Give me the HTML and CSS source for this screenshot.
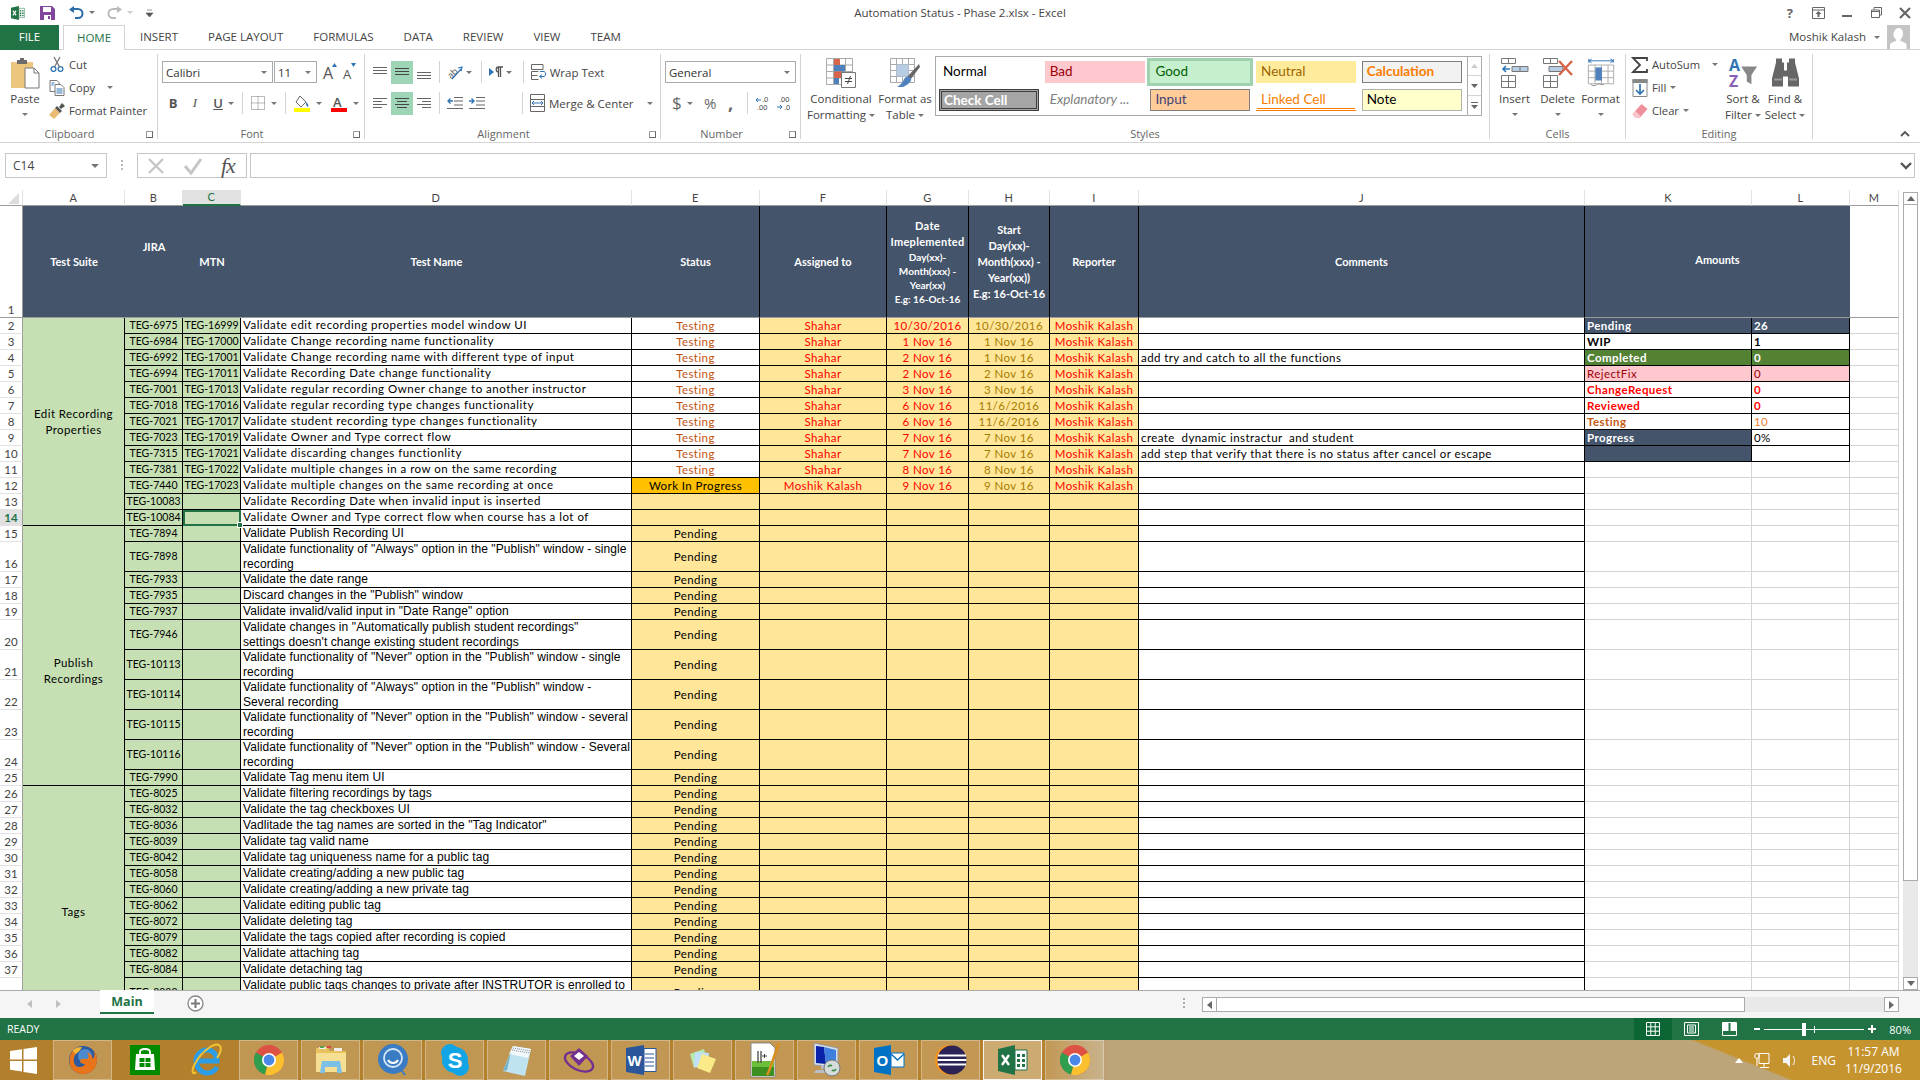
FILE: index.html
```html
<!DOCTYPE html>
<html lang="en">

<head>
    <meta charset="UTF-8">
    <meta name="viewport" content="width=device-width, initial-scale=1.0">
    <title>Automation Status - Phase 2.xlsx - Excel</title>
    <link rel="stylesheet" href="styles.css">
</head>

<body>
    <!-- shared logos -->
    <svg class="defs" width="0" height="0">
        <symbol id="logo-excel" viewBox="0 0 30 30">
            <path d="M0 4 17 0V30L0 26Z" fill="#217346"/>
            <path d="M4 10l7 10M11 10 4 20" stroke="#fff" stroke-width="2.4" fill="none"/>
            <path d="M17 5H29V25H17Z" fill="#fff" stroke="#217346"/>
            <path d="M19 9h3v3h-3zM24 9h3v3h-3zM19 14h3v3h-3zM24 14h3v3h-3zM19 19h3v3h-3zM24 19h3v3h-3z" fill="#217346"/>
        </symbol>
        <symbol id="logo-chrome" viewBox="0 0 30 30">
            <circle cx="15" cy="15" r="15" fill="#de5245"/>
            <path d="M15 15 2 7.5A15 15 0 0 0 11 29.5Z" fill="#2f9e4f"/>
            <path d="M15 15 28 7.5A15 15 0 0 1 11 29.5L15 15Z" fill="#fbc02d"/>
            <circle cx="15" cy="15" r="7" fill="#fff"/>
            <circle cx="15" cy="15" r="5.4" fill="#4a88e8"/>
        </symbol>
    </svg>

    <div class="app">
        <!-- Title bar -->
        <header class="titlebar">
            <div class="qat">
                <svg class="qat-logo" width="16" height="14"><use href="#logo-excel"/></svg>
                <svg width="15" height="14" viewBox="0 0 15 14"><path d="M0 0H12L15 3V14H0Z" fill="#80479c"/><path d="M3 1h8v5H3z" fill="#fff"/><path d="M4 9h7v5H4z" fill="#fff"/><path d="M8 10h2v3H8z" fill="#80479c"/></svg>
                <svg class="undo" width="15" height="14" viewBox="0 0 15 14"><path d="M4 3H9A4.5 4.5 0 0 1 9 12H6" fill="none" stroke="#2b6ca8" stroke-width="2"/><path d="M5 0V7L0 3.5Z" fill="#2b6ca8"/></svg>
                <span class="caret"></span>
                <svg class="redo" width="15" height="14" viewBox="0 0 15 14"><path d="M11 3H6A4.5 4.5 0 0 0 6 12H9" fill="none" stroke="#bbb" stroke-width="2"/><path d="M10 0V7L15 3.5Z" fill="#bbb"/></svg>
                <span class="caret pale"></span>
                <svg class="qat-more" width="7" height="8" viewBox="0 0 7 8"><path d="M1 1h5M0 4h7L3.5 8Z" fill="#555" stroke="#555" stroke-width=".6"/></svg>
            </div>
            <div class="doc-title">Automation Status - Phase 2.xlsx - Excel</div>
            <div class="win-btns">
                <span class="help">?</span>
                <svg width="13" height="12" viewBox="0 0 13 12"><path d="M.5.5h12v11H.5zM.5 3h12" fill="none" stroke="#666"/><path d="M6.5 4 3.5 7h2v3h2V7h2Z" fill="#666"/></svg>
                <svg class="win-min" width="10" height="10" viewBox="0 0 10 10"><path d="M0 7h10v2H0z" fill="#666"/></svg>
                <svg width="11" height="11" viewBox="0 0 11 11"><path d="M3 2.500V.5h7.500V8H8.500M.5 3h8v7.500H.5zM.5 4.500h8" fill="none" stroke="#666"/></svg>
                <svg width="12" height="12" viewBox="0 0 12 12"><path d="M1 1 11 11M11 1 1 11" stroke="#666" stroke-width="2.200"/></svg>
            </div>
        </header>

        <!-- Ribbon tabs -->
        <nav class="tabs">
            <div class="tab file">FILE</div>
            <div class="tab active">HOME</div>
            <div class="tab">INSERT</div>
            <div class="tab">PAGE LAYOUT</div>
            <div class="tab">FORMULAS</div>
            <div class="tab">DATA</div>
            <div class="tab">REVIEW</div>
            <div class="tab">VIEW</div>
            <div class="tab">TEAM</div>
            <div class="user">
                <span class="user-name">Moshik Kalash</span>
                <span class="caret"></span>
                <svg class="avatar" width="23" height="24" viewBox="0 0 23 24"><path d="M0 0h23v24H0z" fill="#c4c4c4"/><path d="M11.500 3c3 0 4.500 2.500 4.500 5.500s-1.500 5-2.500 6v1.500c3 1 5.500 2 6 3.500V24H3v-4.500c.5-1.500 3-2.500 6-3.500v-1.500c-1-1-2.500-2.500-2.500-5S8.500 3 11.500 3Z" fill="#fff"/></svg>
            </div>
        </nav>

        <!-- Ribbon -->
        <div class="ribbon">
            <section class="group clipboard">
                <div class="group-body">
                    <div class="big paste">
                        <svg width="28" height="30" viewBox="0 0 28 30"><path d="M0 4H22V30H0Z" fill="#ecc67f"/><path d="M6 2h3V0h4v2h3v4H6Z" fill="#6b6b6b"/><path d="M14 10h9l5 5v15H14Z" fill="#fff" stroke="#777"/><path d="M23 10v5h5" fill="none" stroke="#777"/></svg>
                        <div class="big-text">Paste</div>
                        <span class="caret"></span>
                    </div>
                    <div class="small-col">
                        <div class="small"><svg width="14" height="15" viewBox="0 0 14 15"><circle cx="3.500" cy="12" r="2.400" fill="none" stroke="#2f75b5" stroke-width="1.300"/><circle cx="10.500" cy="12" r="2.400" fill="none" stroke="#2f75b5" stroke-width="1.300"/><path d="M4.500 10 10 0M9.500 10 4 0" stroke="#777" stroke-width="1.300"/></svg><span>Cut</span></div>
                        <div class="small"><svg width="15" height="16" viewBox="0 0 15 16"><path d="M.5.5h7l2 2v9H.5Z" fill="#fff" stroke="#777"/><path d="M5.500 4.500h6l3 3v8h-9Z" fill="#fff" stroke="#777"/><path d="M7 9h6M7 11h6M7 13h6M2 3h3M2 5h2" stroke="#2f75b5"/></svg><span>Copy</span><span class="caret gap"></span></div>
                        <div class="small"><svg width="16" height="16" viewBox="0 0 16 16"><path d="M0 12 6 5l5 5-6 6Z" fill="#e8bd73"/><path d="M6 5l2-2 5 5-2 2Z" fill="#555"/><path d="M10 4l3-4 3 3-4 3Z" fill="#555"/></svg><span>Format Painter</span></div>
                    </div>
                </div>
                <div class="group-label">Clipboard<i class="launcher"></i></div>
            </section>

            <section class="group font">
                <div class="group-body rows">
                    <div class="row">
                        <div class="combo font-name"><span>Calibri</span><span class="caret"></span></div>
                        <div class="combo font-size"><span>11</span><span class="caret"></span></div>
                        <svg class="grow" width="16" height="18" viewBox="0 0 16 18"><text x="0" y="16" class="svg-a big-a">A</text><path d="M9 4 11.500 0 14 4Z" fill="#2f75b5"/></svg>
                        <svg class="shrink" width="16" height="18" viewBox="0 0 16 18"><text x="1" y="16" class="svg-a">A</text><path d="M9 0 11.500 4 14 0Z" fill="#2f75b5"/></svg>
                    </div>
                    <div class="row font-tools">
                        <b class="fmt bold">B</b>
                        <i class="fmt ital">I</i>
                        <u class="fmt under">U</u>
                        <span class="caret"></span>
                        <span class="sep"></span>
                        <svg width="14" height="14" viewBox="0 0 14 14"><path d="M.5.5h13v13H.5zM7 .5v13M.5 7h13" fill="none" stroke="#777" stroke-dasharray="1 1"/></svg>
                        <span class="caret"></span>
                        <span class="sep"></span>
                        <svg width="16" height="17" viewBox="0 0 16 17"><path d="M6 1 12 7 7 12 2 7Z" fill="#fff" stroke="#666"/><path d="M12 7c2 2 3 3 2 5-2-1-2-3-2-5Z" fill="#2f75b5"/><path d="M0 13h16v4H0z" fill="#ffff00"/></svg>
                        <span class="caret"></span>
                        <svg width="16" height="17" viewBox="0 0 16 17"><text x="2" y="12" class="svg-a strong">A</text><path d="M0 13h16v4H0z" fill="#ff0000"/></svg>
                        <span class="caret"></span>
                    </div>
                </div>
                <div class="group-label">Font<i class="launcher"></i></div>
            </section>

            <section class="group alignment">
                <div class="group-body rows">
                    <div class="row">
                        <div class="align-set">
                            <span class="alb"><svg width="14" height="14" viewBox="0 0 14 14"><path d="M0 2.500h14M0 5.500h14M0 8.500h14" stroke="#666"/></svg></span>
                            <span class="alb on"><svg width="14" height="14" viewBox="0 0 14 14"><path d="M0 3.500h14M0 6.500h14M0 9.500h14" stroke="#444"/></svg></span>
                            <span class="alb"><svg width="14" height="14" viewBox="0 0 14 14"><path d="M0 7.500h14M0 10.500h14M0 13.500h14" stroke="#666"/></svg></span>
                        </div>
                        <span class="sep"></span>
                        <div class="drop">
                            <svg width="16" height="16" viewBox="0 0 16 16"><text x="0" y="12" transform="rotate(-45 6 9)" class="svg-small">ab</text><path d="M5 15 14 5M11 4l4-1-1 4" fill="none" stroke="#2f75b5" stroke-width="1.200"/></svg>
                            <span class="caret"></span>
                        </div>
                        <span class="sep"></span>
                        <div class="drop">
                            <svg width="14" height="12" viewBox="0 0 14 12"><path d="M0 2 5 6 0 10Z" fill="#2f75b5"/><path d="M9.500 11V1H14M11.500 11V1M9.500 1C6.500 1 6.500 6 9.500 6" fill="none" stroke="#555" stroke-width="1.300"/></svg>
                            <span class="caret"></span>
                        </div>
                        <span class="sep"></span>
                        <div class="cmd">
                            <svg width="15" height="18" viewBox="0 0 15 18"><path d="M.5 1.500H12M.5 1.500v5H12v-5M.5 8.500h7M.5 12.500h6M.5 16.500h7M.5 8.500v8" fill="none" stroke="#666"/><path d="M9 8.500h4c2 0 2 5 0 5H9M11 11.500 8.500 13.500 11 15.500" fill="none" stroke="#2f75b5"/></svg>
                            <span>Wrap Text</span>
                        </div>
                    </div>
                    <div class="row">
                        <div class="align-set">
                            <span class="alb"><svg width="14" height="14" viewBox="0 0 14 14"><path d="M0 2.500h14M0 5.500h9M0 8.500h14M0 11.500h9" stroke="#666"/></svg></span>
                            <span class="alb on"><svg width="14" height="14" viewBox="0 0 14 14"><path d="M0 2.500h14M2 5.500h10M0 8.500h14M2 11.500h10" stroke="#444"/></svg></span>
                            <span class="alb"><svg width="14" height="14" viewBox="0 0 14 14"><path d="M0 2.500h14M5 5.500h9M0 8.500h14M5 11.500h9" stroke="#666"/></svg></span>
                        </div>
                        <span class="sep"></span>
                        <div class="indents">
                            <svg width="16" height="12" viewBox="0 0 16 12"><path d="M7 .5h9M7 4h9M7 8h9M0 11.500h16" stroke="#666"/><path d="M6 4H1M3.500 1.500 1 4l2.500 2.500" fill="none" stroke="#2f75b5" stroke-width="1.300"/></svg>
                            <svg width="16" height="12" viewBox="0 0 16 12"><path d="M7 .5h9M7 4h9M7 8h9M0 11.500h16" stroke="#666"/><path d="M0 4h5M2.500 1.500 5 4 2.500 6.500" fill="none" stroke="#2f75b5" stroke-width="1.300"/></svg>
                        </div>
                        <span class="sep push"></span>
                        <div class="cmd">
                            <svg width="15" height="18" viewBox="0 0 15 18"><path d="M.5.5h14v17H.5zM.5 5.500h14M.5 12.500h14" fill="none" stroke="#666"/><path d="M2 9h11M4 7 2 9l2 2M11 7l2 2-2 2" fill="none" stroke="#2f75b5"/></svg>
                            <span>Merge &amp; Center</span>
                            <span class="caret gap"></span>
                        </div>
                    </div>
                </div>
                <div class="group-label">Alignment<i class="launcher"></i></div>
            </section>

            <section class="group number">
                <div class="group-body rows">
                    <div class="row">
                        <div class="combo num-format"><span>General</span><span class="caret"></span></div>
                    </div>
                    <div class="row num-tools">
                        <span class="sym dollar">$</span>
                        <span class="caret"></span>
                        <span class="sym pct">%</span>
                        <span class="sym comma">,</span>
                        <span class="sep"></span>
                        <svg width="14" height="15" viewBox="0 0 14 15"><path d="M1 4h5M3 2 1 4l2 2" fill="none" stroke="#2f75b5"/><text x="7" y="6" class="svg-tiny">.0</text><text x="2" y="14" class="svg-tiny">.00</text></svg>
                        <svg width="14" height="15" viewBox="0 0 14 15"><text x="2" y="6" class="svg-tiny">.00</text><path d="M0 11h5M3 9l2 2-2 2" fill="none" stroke="#2f75b5"/><text x="7" y="14" class="svg-tiny">.0</text></svg>
                    </div>
                </div>
                <div class="group-label">Number<i class="launcher"></i></div>
            </section>

            <section class="group styles">
                <div class="group-body">
                    <div class="big cond">
                        <svg width="30" height="30" viewBox="0 0 30 30"><path d="M.5.500h26v26H.5zM7.500.5v26M.5 7h26M.5 13.500h26M.5 20h26M19.500.5v26" fill="#fff" stroke="#aaa"/><path d="M8 1h6v6H8z" fill="#d8654a"/><path d="M8 7h11v6.500H8z" fill="#4f81bd"/><path d="M8 13.500h8V20H8z" fill="#d8654a"/><path d="M8 20h5v6H8z" fill="#4f81bd"/><path d="M15.500 14.500h14v15h-14z" fill="#fff" stroke="#777"/><path d="M19 20.500h7M19 23.500h7M24.500 18l-3 8" stroke="#444"/></svg>
                        <div class="big-text">Conditional<br>Formatting<span class="caret"></span></div>
                    </div>
                    <div class="big fmt-table">
                        <svg width="30" height="30" viewBox="0 0 30 30"><path d="M.5.500h24v24H.5zM6.500.5v24M12.500.5v24M18.500.5v24M.5 6.500h24M.5 12.500h24M.5 18.500h24" fill="#fff" stroke="#aaa"/><path d="M6.500 6.500h12v12h-12z" fill="#b8cce4"/><path d="M29 6 17 19l3 3L30 9Z" fill="#666"/><path d="M14 21c3-3 5-3 7-1 1 3-2 6-8 9H7c3-2 6-4 7-8Z" fill="#4f81bd"/></svg>
                        <div class="big-text">Format as<br>Table<span class="caret"></span></div>
                    </div>
                    <div class="gallery">
                        <div class="gallery-grid">
                            <div class="cs normal">Normal</div>
                            <div class="cs bad">Bad</div>
                            <div class="cs good">Good</div>
                            <div class="cs neutral">Neutral</div>
                            <div class="cs calc">Calculation</div>
                            <div class="cs check">Check Cell</div>
                            <div class="cs expl">Explanatory ...</div>
                            <div class="cs input">Input</div>
                            <div class="cs linked">Linked Cell</div>
                            <div class="cs note">Note</div>
                        </div>
                        <div class="spin">
                            <div><svg width="7" height="4" viewBox="0 0 7 4"><path d="M3.500 0 7 4H0Z" fill="#ccc"/></svg></div>
                            <div><svg width="7" height="4" viewBox="0 0 7 4"><path d="M0 0H7L3.500 4Z" fill="#666"/></svg></div>
                            <div><svg width="7" height="7" viewBox="0 0 7 7"><path d="M0 .5h7" stroke="#666"/><path d="M0 3H7L3.500 7Z" fill="#666"/></svg></div>
                        </div>
                    </div>
                </div>
                <div class="group-label">Styles</div>
            </section>

            <section class="group cells">
                <div class="group-body">
                    <div class="big cellbtn">
                        <svg width="28" height="30" viewBox="0 0 28 30"><path d="M.5.500h14v5H.5zM7.500.5v5M.5 17.500h14v12H.5zM.5 23.500h14M7.500 17.500v12" fill="#fff" stroke="#777"/><path d="M11 8.500h16v5H11z" fill="#b8cce4" stroke="#777"/><path d="M19 8.500v5" stroke="#777"/><path d="M9 11H2M5 8 2 11l3 3" fill="none" stroke="#2f75b5" stroke-width="1.600"/></svg>
                        <div class="big-text">Insert</div>
                        <span class="caret"></span>
                    </div>
                    <div class="big cellbtn">
                        <svg width="30" height="30" viewBox="0 0 30 30"><path d="M.5.500h14v5H.5zM7.500.5v5M.5 17.500h14v12H.5zM.5 23.500h14M7.500 17.500v12" fill="#fff" stroke="#777"/><path d="M6 8.500h14v5H6z" fill="#b8cce4" stroke="#777"/><path d="M16 3 29 17M29 3 16 17" stroke="#d8654a" stroke-width="2.400"/></svg>
                        <div class="big-text">Delete</div>
                        <span class="caret"></span>
                    </div>
                    <div class="big cellbtn">
                        <svg width="28" height="30" viewBox="0 0 28 32"><path d="M1 3h26M1 1v4M27 1v4M4 1 1 3l3 2M24 1l3 2-3 2" fill="none" stroke="#2f75b5"/><path d="M.5 7.500h27v20H.5zM7.500 7.500v20M14.500 7.500v20M21.500 7.500v20M.5 14h27M.5 21h27" fill="#fff" stroke="#aaa"/><path d="M8 10h7v14H8z" fill="#4f81bd"/><path d="M3 28c2 2 5 2 7 0s5 2 7 0" fill="none" stroke="#888"/></svg>
                        <div class="big-text">Format</div>
                        <span class="caret"></span>
                    </div>
                </div>
                <div class="group-label">Cells</div>
            </section>

            <section class="group editing">
                <div class="group-body">
                    <div class="small-col editing-col">
                        <div class="small"><svg width="16" height="16" viewBox="0 0 16 16"><path d="M15 4V1H1L8 8 1 15H15V12" fill="none" stroke="#444" stroke-width="1.800"/></svg><span>AutoSum</span><span class="caret gap"></span></div>
                        <div class="small"><svg width="15" height="18" viewBox="0 0 15 18"><path d="M.5.5h14v17H.5z" fill="#fff" stroke="#888"/><path d="M0 0h15v4H0z" fill="#888"/><path d="M7.500 5v10M3.500 11l4 4 4-4" fill="none" stroke="#2f75b5" stroke-width="1.700"/></svg><span>Fill</span><span class="caret"></span></div>
                        <div class="small"><svg width="15" height="14" viewBox="0 0 15 14"><path d="M0 10 9 0l6 5-8 9H3Z" fill="#ef8f9b"/><path d="M0 10l3-3 5 5-1 2H3Z" fill="#f7c6cc"/></svg><span>Clear</span><span class="caret"></span></div>
                    </div>
                    <div class="big editbtn">
                        <svg width="30" height="30" viewBox="0 0 30 32"><text x="0" y="14" class="az blue">A</text><text x="0" y="31" class="az purple">Z</text><path d="M13 9H30L24 18V28L19 25V18Z" fill="#888"/></svg>
                        <div class="big-text">Sort &amp;<br>Filter<span class="caret"></span></div>
                    </div>
                    <div class="big editbtn">
                        <svg width="27" height="29" viewBox="0 0 27 29"><path d="M4 0H10V4H12V12H15V4H17V0H23V4L27 20V28H16V18H11V28H0V20L4 4Z" fill="#666"/><path d="M2 20h8v2H2zM17 20h8v2h-8z" fill="#999"/></svg>
                        <div class="big-text">Find &amp;<br>Select<span class="caret"></span></div>
                    </div>
                </div>
                <div class="group-label">Editing</div>
            </section>

            <svg class="collapse" width="10" height="6" viewBox="0 0 10 6"><path d="M1 5 5 1l4 4" fill="none" stroke="#555" stroke-width="1.800"/></svg>
        </div>

        <!-- Formula bar -->
        <div class="formula">
            <div class="namebox"><span>C14</span><span class="caret big-caret"></span></div>
            <div class="fdots"></div>
            <div class="fx-box">
                <svg width="18" height="18" viewBox="0 0 18 18"><path d="M2 2 16 16M16 2 2 16" stroke="#c6c6c6" stroke-width="2.400"/></svg>
                <svg width="20" height="18" viewBox="0 0 20 18"><path d="M2 9l6 7L18 2" fill="none" stroke="#c6c6c6" stroke-width="3"/></svg>
                <span class="fx">fx</span>
            </div>
            <div class="finput">
                <svg width="12" height="8" viewBox="0 0 12 8"><path d="M1 1l5 5 5-5" fill="none" stroke="#555" stroke-width="2.400"/></svg>
            </div>
        </div>

        <!-- Worksheet -->
        <div class="sheet">
            <div class="grid-wrap">
                <table class="grid">
                    <colgroup>
                        <col class="c-rh"><col class="c-a"><col class="c-b"><col class="c-c"><col class="c-d"><col class="c-e"><col class="c-f"><col class="c-g"><col class="c-h"><col class="c-i"><col class="c-j"><col class="c-k"><col class="c-l"><col class="c-m">
                    </colgroup>
                    <thead>
                        <tr class="letters">
                            <th class="corner"><svg width="11" height="11" viewBox="0 0 11 11"><path d="M11 0V11H0Z" fill="#dcdcdc"/></svg></th>
                            <th>A</th><th>B</th><th class="cur">C</th><th>D</th><th>E</th><th>F</th><th>G</th><th>H</th><th>I</th><th>J</th><th>K</th><th>L</th><th>M</th>
                        </tr>
                    </thead>
                    <tbody>
                        <tr class="head">
                            <th class="rh">1</th>
                            <td>Test Suite</td>
                            <td>JIRA<br>&nbsp;<br>&nbsp;</td>
                            <td>MTN</td>
                            <td class="ln">Test Name</td>
                            <td class="edge">Status</td>
                            <td class="edge">Assigned to</td>
                            <td class="edge"><div class="h-big">Date<br>Imeplemented</div><div class="h-small">Day(xx)-<br>Month(xxx) -<br>Year(xx)<br>E.g: 16-Oct-16</div></td>
                            <td class="edge">Start<br>Day(xx)-<br>Month(xxx) -<br>Year(xx))<br>E.g: 16-Oct-16</td>
                            <td class="edge">Reporter</td>
                            <td class="edge">Comments</td>
                            <td class="edge amounts" colspan="2">Amounts</td>
                            <td class="blank"></td>
                        </tr>
                        <tr>
                            <th class="rh">2</th>
                            <td class="suite" rowspan="13">Edit Recording<br>Properties</td>
                            <td class="id">TEG-6975</td><td class="id mtn">TEG-16999</td>
                            <td class="name cal">Validate edit recording properties model window UI</td>
                            <td class="st testing">Testing</td><td class="y red">Shahar</td><td class="y red">10/30/2016</td><td class="y gold">10/30/2016</td><td class="y red">Moshik Kalash</td><td class="note-c"></td>
                            <td class="kl dark bold-w">Pending</td><td class="kl dark bold-w">26</td><td class="blank"></td>
                        </tr>
                        <tr>
                            <th class="rh">3</th>
                            <td class="id">TEG-6984</td><td class="id mtn">TEG-17000</td>
                            <td class="name cal">Validate Change recording name functionality</td>
                            <td class="st testing">Testing</td><td class="y red">Shahar</td><td class="y red">1 Nov 16</td><td class="y gold">1 Nov 16</td><td class="y red">Moshik Kalash</td><td class="note-c"></td>
                            <td class="kl strong">WIP</td><td class="kl strong">1</td><td class="blank"></td>
                        </tr>
                        <tr>
                            <th class="rh">4</th>
                            <td class="id">TEG-6992</td><td class="id mtn">TEG-17001</td>
                            <td class="name cal">Validate Change recording name with different type of input</td>
                            <td class="st testing">Testing</td><td class="y red">Shahar</td><td class="y red">2 Nov 16</td><td class="y gold">1 Nov 16</td><td class="y red">Moshik Kalash</td><td class="note-c">add try and catch to all the functions</td>
                            <td class="kl done bold-w">Completed</td><td class="kl done bold-w">0</td><td class="blank"></td>
                        </tr>
                        <tr>
                            <th class="rh">5</th>
                            <td class="id">TEG-6994</td><td class="id mtn">TEG-17011</td>
                            <td class="name cal">Validate Recording Date change functionality</td>
                            <td class="st testing">Testing</td><td class="y red">Shahar</td><td class="y red">2 Nov 16</td><td class="y gold">2 Nov 16</td><td class="y red">Moshik Kalash</td><td class="note-c"></td>
                            <td class="kl reject">RejectFix</td><td class="kl reject">0</td><td class="blank"></td>
                        </tr>
                        <tr>
                            <th class="rh">6</th>
                            <td class="id">TEG-7001</td><td class="id mtn">TEG-17013</td>
                            <td class="name cal">Validate regular recording Owner change to another instructor</td>
                            <td class="st testing">Testing</td><td class="y red">Shahar</td><td class="y red">3 Nov 16</td><td class="y gold">3 Nov 16</td><td class="y red">Moshik Kalash</td><td class="note-c"></td>
                            <td class="kl strong red">ChangeRequest</td><td class="kl strong red">0</td><td class="blank"></td>
                        </tr>
                        <tr>
                            <th class="rh">7</th>
                            <td class="id">TEG-7018</td><td class="id mtn">TEG-17016</td>
                            <td class="name cal">Validate regular recording type changes functionality</td>
                            <td class="st testing">Testing</td><td class="y red">Shahar</td><td class="y red">6 Nov 16</td><td class="y gold">11/6/2016</td><td class="y red">Moshik Kalash</td><td class="note-c"></td>
                            <td class="kl strong red">Reviewed</td><td class="kl strong red">0</td><td class="blank"></td>
                        </tr>
                        <tr>
                            <th class="rh">8</th>
                            <td class="id">TEG-7021</td><td class="id mtn">TEG-17017</td>
                            <td class="name cal">Validate student recording type changes functionality</td>
                            <td class="st testing">Testing</td><td class="y red">Shahar</td><td class="y red">6 Nov 16</td><td class="y gold">11/6/2016</td><td class="y red">Moshik Kalash</td><td class="note-c"></td>
                            <td class="kl strong rust">Testing</td><td class="kl orange">10</td><td class="blank"></td>
                        </tr>
                        <tr>
                            <th class="rh">9</th>
                            <td class="id">TEG-7023</td><td class="id mtn">TEG-17019</td>
                            <td class="name cal">Validate Owner and Type correct flow</td>
                            <td class="st testing">Testing</td><td class="y red">Shahar</td><td class="y red">7 Nov 16</td><td class="y gold">7 Nov 16</td><td class="y red">Moshik Kalash</td><td class="note-c">create&nbsp; dynamic instractur&nbsp; and student</td>
                            <td class="kl dark bold-w">Progress</td><td class="kl">0%</td><td class="blank"></td>
                        </tr>
                        <tr>
                            <th class="rh">10</th>
                            <td class="id">TEG-7315</td><td class="id mtn">TEG-17021</td>
                            <td class="name cal">Validate discarding changes functionlity</td>
                            <td class="st testing">Testing</td><td class="y red">Shahar</td><td class="y red">7 Nov 16</td><td class="y gold">7 Nov 16</td><td class="y red">Moshik Kalash</td><td class="note-c">add step that verify that there is no status after cancel or escape</td>
                            <td class="kl dark"></td><td class="kl"></td><td class="blank"></td>
                        </tr>
                        <tr>
                            <th class="rh">11</th>
                            <td class="id">TEG-7381</td><td class="id mtn">TEG-17022</td>
                            <td class="name cal">Validate multiple changes in a row on the same recording</td>
                            <td class="st testing">Testing</td><td class="y red">Shahar</td><td class="y red">8 Nov 16</td><td class="y gold">8 Nov 16</td><td class="y red">Moshik Kalash</td><td class="note-c"></td>
                            <td class="blank"></td><td class="blank"></td><td class="blank"></td>
                        </tr>
                        <tr>
                            <th class="rh">12</th>
                            <td class="id">TEG-7440</td><td class="id mtn">TEG-17023</td>
                            <td class="name cal">Validate multiple changes on the same recording at once</td>
                            <td class="st wip">Work In Progress</td><td class="y red">Moshik Kalash</td><td class="y red">9 Nov 16</td><td class="y gold">9 Nov 16</td><td class="y red">Moshik Kalash</td><td class="note-c"></td>
                            <td class="blank"></td><td class="blank"></td><td class="blank"></td>
                        </tr>
                        <tr>
                            <th class="rh">13</th>
                            <td class="id">TEG-10083</td><td class="id"></td>
                            <td class="name cal">Validate Recording Date when invalid input is inserted</td>
                            <td class="y"></td><td class="y"></td><td class="y"></td><td class="y"></td><td class="y"></td><td class="note-c"></td>
                            <td class="blank"></td><td class="blank"></td><td class="blank"></td>
                        </tr>
                        <tr>
                            <th class="rh cur-row">14</th>
                            <td class="id">TEG-10084</td><td class="id selected"><span class="handle"></span></td>
                            <td class="name cal">Validate Owner and Type correct flow when course has a lot of</td>
                            <td class="y"></td><td class="y"></td><td class="y"></td><td class="y"></td><td class="y"></td><td class="note-c"></td>
                            <td class="blank"></td><td class="blank"></td><td class="blank"></td>
                        </tr>
                        <tr>
                            <th class="rh">15</th>
                            <td class="suite" rowspan="11"><div class="suite-shift">Publish<br>Recordings</div></td>
                            <td class="id">TEG-7894</td><td class="id"></td>
                            <td class="name">Validate Publish Recording UI</td>
                            <td class="y">Pending</td><td class="y"></td><td class="y"></td><td class="y"></td><td class="y"></td><td class="note-c"></td>
                            <td class="blank"></td><td class="blank"></td><td class="blank"></td>
                        </tr>
                        <tr class="tall">
                            <th class="rh">16</th>
                            <td class="id">TEG-7898</td><td class="id"></td>
                            <td class="name">Validate functionality of "Always" option in the "Publish" window - single recording</td>
                            <td class="y">Pending</td><td class="y"></td><td class="y"></td><td class="y"></td><td class="y"></td><td class="note-c"></td>
                            <td class="blank"></td><td class="blank"></td><td class="blank"></td>
                        </tr>
                        <tr>
                            <th class="rh">17</th>
                            <td class="id">TEG-7933</td><td class="id"></td>
                            <td class="name">Validate the date range</td>
                            <td class="y">Pending</td><td class="y"></td><td class="y"></td><td class="y"></td><td class="y"></td><td class="note-c"></td>
                            <td class="blank"></td><td class="blank"></td><td class="blank"></td>
                        </tr>
                        <tr>
                            <th class="rh">18</th>
                            <td class="id">TEG-7935</td><td class="id"></td>
                            <td class="name">Discard changes in the "Publish" window</td>
                            <td class="y">Pending</td><td class="y"></td><td class="y"></td><td class="y"></td><td class="y"></td><td class="note-c"></td>
                            <td class="blank"></td><td class="blank"></td><td class="blank"></td>
                        </tr>
                        <tr>
                            <th class="rh">19</th>
                            <td class="id">TEG-7937</td><td class="id"></td>
                            <td class="name">Validate invalid/valid input in "Date Range" option</td>
                            <td class="y">Pending</td><td class="y"></td><td class="y"></td><td class="y"></td><td class="y"></td><td class="note-c"></td>
                            <td class="blank"></td><td class="blank"></td><td class="blank"></td>
                        </tr>
                        <tr class="tall">
                            <th class="rh">20</th>
                            <td class="id">TEG-7946</td><td class="id"></td>
                            <td class="name">Validate changes in "Automatically publish student recordings"<br>settings doesn't change existing student recordings</td>
                            <td class="y">Pending</td><td class="y"></td><td class="y"></td><td class="y"></td><td class="y"></td><td class="note-c"></td>
                            <td class="blank"></td><td class="blank"></td><td class="blank"></td>
                        </tr>
                        <tr class="tall">
                            <th class="rh">21</th>
                            <td class="id">TEG-10113</td><td class="id"></td>
                            <td class="name">Validate functionality of "Never" option in the "Publish" window - single recording</td>
                            <td class="y">Pending</td><td class="y"></td><td class="y"></td><td class="y"></td><td class="y"></td><td class="note-c"></td>
                            <td class="blank"></td><td class="blank"></td><td class="blank"></td>
                        </tr>
                        <tr class="tall">
                            <th class="rh">22</th>
                            <td class="id">TEG-10114</td><td class="id"></td>
                            <td class="name">Validate functionality of "Always" option in the "Publish" window - Several recording</td>
                            <td class="y">Pending</td><td class="y"></td><td class="y"></td><td class="y"></td><td class="y"></td><td class="note-c"></td>
                            <td class="blank"></td><td class="blank"></td><td class="blank"></td>
                        </tr>
                        <tr class="tall">
                            <th class="rh">23</th>
                            <td class="id">TEG-10115</td><td class="id"></td>
                            <td class="name">Validate functionality of "Never" option in the "Publish" window - several recording</td>
                            <td class="y">Pending</td><td class="y"></td><td class="y"></td><td class="y"></td><td class="y"></td><td class="note-c"></td>
                            <td class="blank"></td><td class="blank"></td><td class="blank"></td>
                        </tr>
                        <tr class="tall">
                            <th class="rh">24</th>
                            <td class="id">TEG-10116</td><td class="id"></td>
                            <td class="name">Validate functionality of "Never" option in the "Publish" window - Several recording</td>
                            <td class="y">Pending</td><td class="y"></td><td class="y"></td><td class="y"></td><td class="y"></td><td class="note-c"></td>
                            <td class="blank"></td><td class="blank"></td><td class="blank"></td>
                        </tr>
                        <tr>
                            <th class="rh">25</th>
                            <td class="id">TEG-7990</td><td class="id"></td>
                            <td class="name">Validate Tag menu item UI</td>
                            <td class="y">Pending</td><td class="y"></td><td class="y"></td><td class="y"></td><td class="y"></td><td class="note-c"></td>
                            <td class="blank"></td><td class="blank"></td><td class="blank"></td>
                        </tr>
                        <tr>
                            <th class="rh">26</th>
                            <td class="suite" rowspan="13"><div class="suite-shift">Tags</div></td>
                            <td class="id">TEG-8025</td><td class="id"></td>
                            <td class="name">Validate filtering recordings by tags</td>
                            <td class="y">Pending</td><td class="y"></td><td class="y"></td><td class="y"></td><td class="y"></td><td class="note-c"></td>
                            <td class="blank"></td><td class="blank"></td><td class="blank"></td>
                        </tr>
                        <tr>
                            <th class="rh">27</th>
                            <td class="id">TEG-8032</td><td class="id"></td>
                            <td class="name">Validate the tag checkboxes UI</td>
                            <td class="y">Pending</td><td class="y"></td><td class="y"></td><td class="y"></td><td class="y"></td><td class="note-c"></td>
                            <td class="blank"></td><td class="blank"></td><td class="blank"></td>
                        </tr>
                        <tr>
                            <th class="rh">28</th>
                            <td class="id">TEG-8036</td><td class="id"></td>
                            <td class="name">Vadlitade the tag names are sorted in the "Tag Indicator"</td>
                            <td class="y">Pending</td><td class="y"></td><td class="y"></td><td class="y"></td><td class="y"></td><td class="note-c"></td>
                            <td class="blank"></td><td class="blank"></td><td class="blank"></td>
                        </tr>
                        <tr>
                            <th class="rh">29</th>
                            <td class="id">TEG-8039</td><td class="id"></td>
                            <td class="name">Validate tag valid name</td>
                            <td class="y">Pending</td><td class="y"></td><td class="y"></td><td class="y"></td><td class="y"></td><td class="note-c"></td>
                            <td class="blank"></td><td class="blank"></td><td class="blank"></td>
                        </tr>
                        <tr>
                            <th class="rh">30</th>
                            <td class="id">TEG-8042</td><td class="id"></td>
                            <td class="name">Validate tag uniqueness name for a public tag</td>
                            <td class="y">Pending</td><td class="y"></td><td class="y"></td><td class="y"></td><td class="y"></td><td class="note-c"></td>
                            <td class="blank"></td><td class="blank"></td><td class="blank"></td>
                        </tr>
                        <tr>
                            <th class="rh">31</th>
                            <td class="id">TEG-8058</td><td class="id"></td>
                            <td class="name">Validate creating/adding a new public tag</td>
                            <td class="y">Pending</td><td class="y"></td><td class="y"></td><td class="y"></td><td class="y"></td><td class="note-c"></td>
                            <td class="blank"></td><td class="blank"></td><td class="blank"></td>
                        </tr>
                        <tr>
                            <th class="rh">32</th>
                            <td class="id">TEG-8060</td><td class="id"></td>
                            <td class="name">Validate creating/adding a new private tag</td>
                            <td class="y">Pending</td><td class="y"></td><td class="y"></td><td class="y"></td><td class="y"></td><td class="note-c"></td>
                            <td class="blank"></td><td class="blank"></td><td class="blank"></td>
                        </tr>
                        <tr>
                            <th class="rh">33</th>
                            <td class="id">TEG-8062</td><td class="id"></td>
                            <td class="name">Validate editing public tag</td>
                            <td class="y">Pending</td><td class="y"></td><td class="y"></td><td class="y"></td><td class="y"></td><td class="note-c"></td>
                            <td class="blank"></td><td class="blank"></td><td class="blank"></td>
                        </tr>
                        <tr>
                            <th class="rh">34</th>
                            <td class="id">TEG-8072</td><td class="id"></td>
                            <td class="name">Validate deleting tag</td>
                            <td class="y">Pending</td><td class="y"></td><td class="y"></td><td class="y"></td><td class="y"></td><td class="note-c"></td>
                            <td class="blank"></td><td class="blank"></td><td class="blank"></td>
                        </tr>
                        <tr>
                            <th class="rh">35</th>
                            <td class="id">TEG-8079</td><td class="id"></td>
                            <td class="name">Validate the tags copied after recording is copied</td>
                            <td class="y">Pending</td><td class="y"></td><td class="y"></td><td class="y"></td><td class="y"></td><td class="note-c"></td>
                            <td class="blank"></td><td class="blank"></td><td class="blank"></td>
                        </tr>
                        <tr>
                            <th class="rh">36</th>
                            <td class="id">TEG-8082</td><td class="id"></td>
                            <td class="name">Validate attaching tag</td>
                            <td class="y">Pending</td><td class="y"></td><td class="y"></td><td class="y"></td><td class="y"></td><td class="note-c"></td>
                            <td class="blank"></td><td class="blank"></td><td class="blank"></td>
                        </tr>
                        <tr>
                            <th class="rh">37</th>
                            <td class="id">TEG-8084</td><td class="id"></td>
                            <td class="name">Validate detaching tag</td>
                            <td class="y">Pending</td><td class="y"></td><td class="y"></td><td class="y"></td><td class="y"></td><td class="note-c"></td>
                            <td class="blank"></td><td class="blank"></td><td class="blank"></td>
                        </tr>
                        <tr class="tall">
                            <th class="rh"></th>
                            <td class="id">TEG-8088</td><td class="id"></td>
                            <td class="name">Validate public tags changes to private after INSTRUTOR is enrolled to<br>a course</td>
                            <td class="y">Pending</td><td class="y"></td><td class="y"></td><td class="y"></td><td class="y"></td><td class="note-c"></td>
                            <td class="blank"></td><td class="blank"></td><td class="blank"></td>
                        </tr>
                    </tbody>
                </table>
            </div>
            <div class="vscroll">
                <div class="sb-btn"><svg width="8" height="5" viewBox="0 0 8 5"><path d="M4 0 8 5H0Z" fill="#666"/></svg></div>
                <div class="vtrack"><div class="vthumb"></div></div>
                <div class="sb-btn"><svg width="8" height="5" viewBox="0 0 8 5"><path d="M0 0H8L4 5Z" fill="#666"/></svg></div>
            </div>
        </div>

        <!-- Sheet tabs -->
        <div class="sheetbar">
            <div class="sheet-nav">
                <svg width="5" height="8" viewBox="0 0 5 8"><path d="M5 0V8L0 4Z" fill="#c0c0c0"/></svg>
                <svg width="5" height="8" viewBox="0 0 5 8"><path d="M0 0V8L5 4Z" fill="#c0c0c0"/></svg>
            </div>
            <div class="sheet-tab">Main</div>
            <svg class="add-sheet" width="17" height="17" viewBox="0 0 17 17"><circle cx="8.500" cy="8.500" r="7.500" fill="#fff" stroke="#888" stroke-width="1.300"/><path d="M8.500 4v9M4 8.500h9" stroke="#777" stroke-width="2"/></svg>
            <div class="sheet-dots"></div>
            <div class="hscroll">
                <div class="sb-btn wide"><svg width="5" height="8" viewBox="0 0 5 8"><path d="M5 0V8L0 4Z" fill="#666"/></svg></div>
                <div class="hthumb"></div>
                <div class="htrack"></div>
                <div class="sb-btn wide"><svg width="5" height="8" viewBox="0 0 5 8"><path d="M0 0V8L5 4Z" fill="#666"/></svg></div>
            </div>
        </div>

        <!-- Status bar -->
        <div class="statusbar">
            <span class="ready">READY</span>
            <div class="status-right">
                <span class="view on"><svg width="14" height="14" viewBox="0 0 14 14"><path d="M.5.500h13v13H.5zM4.800.5v13M9.200.5v13M.5 4.800h13M.5 9.200h13" fill="none" stroke="#fff"/></svg></span>
                <span class="view"><svg width="15" height="14" viewBox="0 0 15 14"><path d="M.5.500h14v13H.5z" fill="none" stroke="#fff"/><path d="M3.500 3h8v8h-8zM5 5h5M5 7h5M5 9h5" fill="none" stroke="#fff"/></svg></span>
                <span class="view"><svg width="15" height="14" viewBox="0 0 15 14"><path d="M.5.500h14v13H.5z" fill="none" stroke="#fff"/><path d="M1 1h5.500v8H1zM8.500 1H14v8H8.500z" fill="#fff"/></svg></span>
                <span class="zoom-minus"></span>
                <div class="slider"><span class="slider-knob"></span><span class="slider-tick"></span></div>
                <svg class="zoom-plus" width="8" height="8" viewBox="0 0 8 8"><path d="M0 3h8v2H0zM3 0h2v8H3z" fill="#fff"/></svg>
                <span class="zoom-val">80%</span>
            </div>
        </div>

        <!-- Taskbar -->
        <footer class="taskbar">
            <svg class="start" width="27" height="27" viewBox="0 0 27 27"><path d="M0 4 12 2.300V12.500H0ZM13.500 2 27 0V12.500H13.500ZM0 14H12V24.500L0 22.800ZM13.500 14H27V27L13.500 25Z" fill="#fff"/></svg>
            <div class="task running">
                <svg width="30" height="30" viewBox="0 0 30 30"><circle cx="15" cy="15" r="14" fill="#2d5a9e"/><circle cx="17" cy="11" r="7" fill="#4d8bd0"/><path d="M5 5C2 9 0 16 3 22c4 8 17 10 23 2 4-5 4-13 0-18 1 4 0 7-1 8-1-4-3-6-6-7 2 3 2 6 0 7-3 0-6-1-7 2 0 2 2 3 5 3-1 3-6 4-9 2C5 18 5 12 8 9 6 9 5 7 5 5Z" fill="#e8751a"/><path d="M5 5c0 2 1 4 3 4 2-2 5-4 6-7-4 0-7 1-9 3Z" fill="#f7b731"/></svg>
            </div>
            <div class="task">
                <svg width="30" height="30" viewBox="0 0 30 30"><path d="M0 0h30v30H0z" fill="#008a00"/><path d="M6 9h18l1 16H5Z" fill="#fff"/><path d="M10 11V7c0-4 10-4 10 0v4" fill="none" stroke="#fff" stroke-width="1.800"/><path d="M9.500 13h5v4h-5zM15.500 13h5v4h-5zM9.500 18h5v4h-5zM15.500 18h5v4h-5z" fill="#008a00"/></svg>
            </div>
            <div class="task">
                <svg width="30" height="32" viewBox="0 0 30 32"><path d="M6 17h19c0-6-4-11-10-11S4 11 4 17s5 12 11 12c5 0 8-2 10-6" fill="none" stroke="#2a9de8" stroke-width="5"/><path d="M4 28C0 32-1 26 4 18 10 7 24-3 28 2c2 3-1 9-3 12" fill="none" stroke="#f3c331" stroke-width="2"/></svg>
            </div>
            <div class="task running"><svg width="30" height="30"><use href="#logo-chrome"/></svg></div>
            <div class="task running">
                <svg width="30" height="32" viewBox="0 0 30 32"><path d="M0 4H12L14 7H30V28H0Z" fill="#e8c25c"/><path d="M3 3h7v2H3zM18 4h8v3h-8z" fill="#eee"/><path d="M4 2h4v2H4z" fill="#5aa34a"/><path d="M11 2h4v2h-4z" fill="#d44"/><path d="M0 9H30V28H0Z" fill="#f6df92"/><path d="M6 17H24L26 29H21V23H9V29H4Z" fill="#7cc0e8"/></svg>
            </div>
            <div class="task running">
                <svg width="30" height="32" viewBox="0 0 30 32"><ellipse cx="15" cy="15" rx="15" ry="15" fill="#3a7cc4"/><path d="M24 27 27 31" stroke="#3a7cc4" stroke-width="2"/><circle cx="15" cy="14" r="9" fill="none" stroke="#d5e6f7" stroke-width="1.800"/><path d="M10 16c2 4 8 4 10 0" fill="none" stroke="#fff" stroke-width="2"/></svg>
            </div>
            <div class="task running">
                <svg width="30" height="32" viewBox="0 0 30 32"><circle cx="10" cy="9" r="9" fill="#12a5e6"/><circle cx="20" cy="23" r="9" fill="#12a5e6"/><circle cx="15" cy="16" r="13" fill="#12a5e6"/><text x="15" y="24" class="skype-s">S</text></svg>
            </div>
            <div class="task running stacked">
                <svg width="28" height="32" viewBox="0 0 28 32"><path d="M10 2 28 5 22 32 0 27Z" fill="#bfe3f0"/><path d="M10 2 28 5 25 14 6 10Z" fill="#f2f9fb"/><path d="M10 4l18 3M9 6l18 3" stroke="#889" stroke-dasharray="1 1"/><path d="M0 27 8 8 4 26Z" fill="#6fb2c9"/></svg>
            </div>
            <div class="task running">
                <svg width="32" height="30" viewBox="0 0 32 30"><ellipse cx="16" cy="17" rx="15" ry="8" transform="rotate(25 16 17)" fill="none" stroke="#742f8f" stroke-width="2.400"/><path d="M16 3 25 11 16 21 7 11Z" fill="#742f8f"/><path d="M16 7 21 11 16 15 11 11Z" fill="#fff"/></svg>
            </div>
            <div class="task running">
                <svg width="30" height="30" viewBox="0 0 30 30"><path d="M0 3 18 0V30L0 27Z" fill="#2b579a"/><text x="1.500" y="21" class="logo-letter">W</text><path d="M18 3.500H30V26.500H18Z" fill="#fff" stroke="#2b579a"/><path d="M19 9h9M19 13h9M19 17h9M19 21h9" stroke="#2b579a"/></svg>
            </div>
            <div class="task running">
                <svg width="30" height="32" viewBox="0 0 30 32"><path d="M2 10 16 5l4 14-14 5Z" fill="#b6eab0"/><path d="M7 8l14 1-1 15-14-1Z" fill="#bfe0f8"/><path d="M14 10 28 15 22 29 9 24Z" fill="#fbea8a"/></svg>
            </div>
            <div class="task running">
                <svg width="30" height="38" viewBox="0 0 30 38"><path d="M1 2H20L25 7V36H1Z" fill="#fff" stroke="#888"/><path d="M2 20H24V35H2Z" fill="#6cbf3a"/><path d="M2 26H24V35H2Z" fill="#3d8f1f"/><path d="M8 10v12M11 10v12" stroke="#555" stroke-width="1.400"/><path d="M29 2 19 30 17 34 19 30" fill="none" stroke="#d98e1e" stroke-width="2.600"/><path d="M12 15h5M14.500 13v4" stroke="#444"/></svg>
            </div>
            <div class="task running">
                <svg width="30" height="36" viewBox="0 0 30 36"><path d="M2 1 26 6V25L2 23Z" fill="#d6dde8" stroke="#999"/><path d="M4 4 12 5 14 22 4 21Z" fill="#0a22a8"/><path d="M12 5 24 8V23L14 22Z" fill="#3f7fdd"/><path d="M9 23h10v4H9zM4 28h18l2 3H2Z" fill="#b8bec8"/><circle cx="20" cy="26" r="8" fill="#d5dadb" stroke="#777"/><path d="M16 25c1-2 3-2 4-1M24 27c-1 2-3 2-4 1" fill="none" stroke="#2f8f3a" stroke-width="1.600"/></svg>
            </div>
            <div class="task running stacked">
                <svg width="30" height="30" viewBox="0 0 30 30"><path d="M0 3 17 0V30L0 27Z" fill="#0072c6"/><text x="2.500" y="21" class="logo-letter">O</text><path d="M17 8H30V22H17Z" fill="#fff" stroke="#0072c6"/><path d="M17 9 23.500 15 30 9" fill="none" stroke="#0072c6" stroke-width="1.400"/></svg>
            </div>
            <div class="task running">
                <svg width="32" height="30" viewBox="0 0 32 30"><circle cx="15" cy="15" r="15" fill="#f7941e"/><circle cx="17" cy="15" r="14.500" fill="#2c2255"/><path d="M3 10.500h28M2.500 15h29M3 19.500h28" stroke="#fff" stroke-width="2"/></svg>
            </div>
            <div class="task running active"><svg width="30" height="30"><use href="#logo-excel"/></svg></div>
            <div class="task running"><svg width="30" height="30"><use href="#logo-chrome"/></svg></div>

            <div class="tray">
                <svg width="8" height="5" viewBox="0 0 8 5"><path d="M4 0 8 5H0Z" fill="#fff"/></svg>
                <svg class="tray-net" width="16" height="16" viewBox="0 0 16 16"><path d="M5 1.500h10v10H5zM10 11.500V15M6 15.500h9" fill="none" stroke="#fff"/><circle cx="3" cy="4" r="2.400" fill="none" stroke="#fff"/><path d="M3 6.500V14" stroke="#fff"/></svg>
                <svg class="tray-vol" width="14" height="15" viewBox="0 0 14 15"><path d="M0 5h3L7 1V14L3 10H0Z" fill="#f4f4f4"/><path d="M10 3c2 3 2 6 0 9" fill="none" stroke="#fff"/></svg>
                <span class="lang">ENG</span>
                <div class="clock"><div>11:57 AM</div><div>11/9/2016</div></div>
            </div>
        </footer>
    </div>
</body>

</html>
```

FILE: styles.css
```css
* {
    box-sizing: border-box;
}

html, body {
    margin: 0;
    height: 100%;
}

body {
    font-family: "Open Sans", "Liberation Sans", sans-serif;
    font-size: 11px;
    color: #444;
    background-color: #fff;
}

.defs {
    display: block;
    height: 0;
}

.app {
    width: 1920px;
    height: 1080px;
    display: flex;
    flex-direction: column;
    overflow: hidden;
}

svg {
    display: block;
    flex: none;
    overflow: visible;
}

.caret {
    display: inline-block;
    width: 0;
    height: 0;
    border: 3px solid transparent;
    border-top-color: #777;
    border-bottom-width: 0;
    flex: none;
}

.caret.pale {
    border-top-color: #ccc;
}

/* Title bar */
.titlebar {
    height: 25px;
    flex: none;
    display: flex;
    align-items: center;
    position: relative;
}

.qat {
    display: flex;
    align-items: center;
    padding-left: 10px;
}

.qat-logo {
    margin-right: 14px;
}

.undo {
    margin-left: 14px;
    margin-right: 5px;
}

.redo {
    margin-left: 12px;
    margin-right: 5px;
}

.qat-more {
    margin-left: 13px;
}

.doc-title {
    position: absolute;
    left: 0;
    right: 0;
    text-align: center;
    font-size: 11.5px;
}

.win-btns {
    margin-left: auto;
    display: flex;
    align-items: center;
    padding-right: 9px;
    gap: 17px;
}

.help {
    font-weight: 700;
    font-size: 13px;
    color: #666;
    margin-right: 2px;
}

.win-min {
    margin-left: 0;
    margin-right: 2px;
}

/* Tabs */
.tabs {
    height: 25px;
    flex: none;
    display: flex;
    border-bottom: 1px solid #d4d4d4;
}

.tab {
    padding: 0 15px;
    line-height: 24px;
    font-size: 11.5px;
    white-space: nowrap;
}

.tab.file {
    width: 59px;
    height: 25px;
    margin-right: 4px;
    padding: 0;
    text-align: center;
    color: #fff;
    background-color: #217346;
}

.tab.active {
    width: 62px;
    height: 25px;
    padding: 0;
    text-align: center;
    color: #217346;
    background-color: #fff;
    border: 1px solid #d4d4d4;
    border-bottom: none;
}

.user {
    margin-left: auto;
    display: flex;
    align-items: center;
    padding-right: 10px;
    font-size: 11.5px;
    height: 24px;
}

.user-name {
    margin-bottom: 2px;
}

.user .caret {
    margin: 0 7px 0 8px;
}

/* Ribbon */
.ribbon {
    height: 93px;
    flex: none;
    display: flex;
    padding-top: 4px;
    border-bottom: 1px solid #d4d4d4;
    position: relative;
}

.group {
    height: 85px;
    border-right: 1px solid #d4d4d4;
    display: flex;
    flex-direction: column;
    flex: none;
}

.clipboard { width: 158px; }
.font { width: 207px; }
.alignment { width: 296px; }
.number { width: 140px; }
.styles { width: 689px; }
.cells { width: 136px; }
.editing { width: 187px; }

.group-body {
    height: 72px;
    flex: none;
    display: flex;
}

.group-body.rows {
    flex-direction: column;
    padding-top: 7px;
    gap: 9px;
}

.group-label {
    position: relative;
    text-align: center;
    line-height: 16px;
    color: #666;
    font-size: 11px;
}

.clipboard .group-label,
.font .group-label,
.alignment .group-label,
.number .group-label {
    padding-right: 18px;
}

.launcher {
    position: absolute;
    right: 4px;
    top: 5px;
    width: 7px;
    height: 7px;
    border-left: 1px solid #999;
    border-top: 1px solid #999;
    border-right: 1px solid #666;
    border-bottom: 1px solid #666;
}

.row {
    display: flex;
    align-items: center;
    height: 22px;
}

.sep {
    width: 1px;
    height: 22px;
    background-color: #d4d4d4;
    margin: 0 8px;
    flex: none;
}

.big {
    display: flex;
    flex-direction: column;
    align-items: center;
    padding-top: 4px;
    flex: none;
}

.big svg {
    height: 30px;
}

.big-text {
    margin-top: 3px;
    line-height: 16px;
    text-align: center;
    white-space: nowrap;
    font-size: 11.5px;
}

.big-text .caret {
    margin-left: 3px;
    vertical-align: middle;
}

.big > .caret {
    margin-top: 6px;
}

.small-col {
    display: flex;
    flex-direction: column;
    margin-top: -1px;
}

.small {
    height: 23px;
    display: flex;
    align-items: center;
    gap: 4px;
    white-space: nowrap;
    font-size: 11.2px;
}

.small .caret.gap {
    margin-left: 8px;
}

/* Clipboard */
.paste {
    width: 34px;
    margin-left: 8px;
    margin-right: 7px;
}

.clipboard .small svg {
    width: 16px;
}

/* Font */
.font .group-body {
    padding-left: 4px;
}

.combo {
    height: 22px;
    border: 1px solid #ababab;
    background-color: #fff;
    display: flex;
    align-items: center;
    justify-content: space-between;
    padding: 0 5px 0 3px;
    font-size: 11.5px;
    color: #333;
}

.font-name {
    width: 111px;
}

.font-size {
    width: 43px;
    margin-left: 1px;
}

.grow {
    margin-left: 6px;
}

.shrink {
    margin-left: 3px;
}

.svg-a {
    font-family: "Open Sans", sans-serif;
    font-size: 13px;
    fill: #555;
}

.svg-a.big-a {
    font-size: 16px;
}

.svg-a.strong {
    font-size: 13px;
    font-weight: 600;
}

.font-tools {
    padding-left: 5px;
}

.fmt {
    width: 12px;
    text-align: center;
    font-size: 13px;
    color: #555;
    font-family: "Liberation Serif", serif;
}

.fmt.bold {
    font-family: "Open Sans", sans-serif;
    margin-right: 10px;
}

.fmt.ital {
    margin-right: 11px;
}

.fmt.under {
    font-family: "Open Sans", sans-serif;
    font-weight: 600;
    margin-right: 4px;
}

.font-tools svg {
    margin-right: 6px;
}

.font-tools .caret + svg {
    margin-left: 9px;
}

.font-tools .sep {
    margin: 0 8px;
}

.font-tools .sep + svg {
    margin-left: 0;
}

/* Alignment */
.alignment .group-body {
    padding-left: 4px;
}

.align-set {
    display: flex;
    margin-right: -4px;
}

.alb {
    width: 22px;
    height: 23px;
    display: flex;
    align-items: center;
    justify-content: center;
}

.alb.on {
    background-color: #9fd5b7;
}

.drop {
    display: flex;
    align-items: center;
    gap: 3px;
    width: 26px;
}

.indents {
    display: flex;
    gap: 6px;
}

.sep.push {
    margin-left: auto;
}

.alignment .row {
    padding-right: 8px;
}

.alignment .sep {
    margin-right: 7px;
}

.cmd {
    display: flex;
    align-items: center;
    gap: 4px;
    white-space: nowrap;
    width: 122px;
    font-size: 11.5px;
}

.cmd .caret.gap {
    margin-left: 9px;
}

/* Number */
.number .group-body {
    padding-left: 4px;
}

.num-format {
    width: 131px;
}

.num-tools {
    padding-left: 7px;
}

.sym {
    color: #666;
    font-size: 17px;
    line-height: 22px;
}

.dollar {
    width: 11px;
    margin-right: 4px;
}

.pct {
    font-size: 15px;
    margin: 0 0 0 11px;
    width: 16px;
}

.comma {
    font-weight: 700;
    font-size: 18px;
    margin-left: 8px;
    width: 10px;
    line-height: 14px;
}

.num-tools .sep {
    margin: 0 7px 0 9px;
}

.num-tools svg + svg {
    margin-left: 8px;
}

.svg-tiny {
    font-family: "Liberation Sans", sans-serif;
    font-size: 7.500px;
    fill: #444;
}

.svg-small {
    font-family: "Open Sans", sans-serif;
    font-size: 9px;
    fill: #555;
}

/* Styles */
.cond {
    width: 62px;
    margin-left: 9px;
}

.fmt-table {
    width: 58px;
    margin-left: 4px;
}

.gallery {
    margin-left: 1px;
    margin-top: 2px;
    width: 547px;
    height: 60px;
    border: 1px solid #ababab;
    display: flex;
    justify-content: space-between;
}

.gallery-grid {
    padding: 4px 0 0 3px;
    display: grid;
    grid-template-columns: repeat(5, 100px);
    grid-template-rows: 22px 22px;
    gap: 6px 5.7px;
}

.cs {
    font-family: Lato, "Liberation Sans", sans-serif;
    font-size: 13.5px;
    line-height: 19px;
    padding-left: 4px;
    color: #000;
    white-space: nowrap;
    border: 1px solid transparent;
}

.cs.normal { padding-left: 3px; }
.cs.bad { background-color: #ffc7ce; color: #9c0006; }
.cs.good { background-color: #c6efce; color: #006100; outline: 3px solid #a0d2b0; }
.cs.neutral { background-color: #ffeb9c; color: #9c6500; }
.cs.calc { background-color: #f2f2f2; color: #fa7d00; font-weight: 700; border-color: #7f7f7f; }
.cs.check { background-color: #a5a5a5; color: #fff; font-weight: 700; border: 3px double #3f3f3f; line-height: 16px; padding-left: 2px; }
.cs.expl { color: #7f7f7f; font-style: italic; }
.cs.input { background-color: #ffcc99; color: #3f3f76; border-color: #7f7f7f; }
.cs.linked { color: #fa7d00; border-bottom: 3px double #fa7d00; line-height: 18px; }
.cs.note { background-color: #ffffcc; border-color: #b2b2b2; }

.spin {
    width: 14px;
    border-left: 1px solid #ababab;
    display: flex;
    flex-direction: column;
}

.spin div {
    height: 20px;
    display: flex;
    align-items: center;
    justify-content: center;
    border-bottom: 1px solid #d4d4d4;
}

.spin div:last-child {
    border-bottom: none;
}

/* Cells */
.cells .group-body {
    padding-left: 3px;
}

.cellbtn {
    width: 43px;
}

/* Editing */
.editing .group-body {
    padding-left: 6px;
}

.editing-col {
    width: 90px;
}

.editing-col .small svg {
    width: 16px;
}

.editbtn {
    width: 42px;
}

.az {
    font-family: "Open Sans", sans-serif;
    font-size: 17px;
    font-weight: 700;
}

.az.blue { fill: #2f75b5; }
.az.purple { fill: #8b5fb5; }

.collapse {
    margin-top: 77px;
    margin-left: 87px;
}

/* Formula bar */
.formula {
    height: 47px;
    flex: none;
    display: flex;
    padding: 10px 5px 12px;
}

.namebox {
    width: 102px;
    border: 1px solid #c6c6c6;
    display: flex;
    align-items: center;
    justify-content: space-between;
    padding: 0 7px;
    font-size: 12px;
}

.big-caret {
    border-width: 4px;
    border-bottom-width: 0;
}

.fdots {
    width: 2px;
    height: 11px;
    margin: 7px 14px 0 14px;
    background: repeating-linear-gradient(#bbb 0 2px, transparent 2px 4px);
}

.fx-box {
    width: 110px;
    border: 1px solid #c6c6c6;
    display: flex;
    align-items: center;
    gap: 18px;
    padding-left: 9px;
}

.fx {
    font-family: "Liberation Serif", serif;
    font-style: italic;
    font-size: 22px;
    color: #555;
    letter-spacing: -1px;
}

.finput {
    flex: 1;
    margin-left: 3px;
    border: 1px solid #c6c6c6;
    display: flex;
    align-items: center;
    justify-content: flex-end;
    padding-right: 2px;
}

/* Worksheet */
.sheet {
    height: 800px;
    flex: none;
    display: flex;
}

.grid-wrap {
    width: 1902px;
    height: 800px;
    overflow: hidden;
}

.grid {
    table-layout: fixed;
    width: 1899px;
    border-collapse: separate;
    border-spacing: 0;
    font-family: Lato, "Liberation Sans", sans-serif;
    font-size: 11.5px;
    color: #000;
    letter-spacing: .42px;
}

.c-rh { width: 23px; }
.c-a { width: 102px; }
.c-b { width: 58px; }
.c-c { width: 58px; }
.c-d { width: 391px; }
.c-e { width: 128px; }
.c-f { width: 127px; }
.c-g { width: 82px; }
.c-h { width: 81px; }
.c-i { width: 89px; }
.c-j { width: 446px; }
.c-k { width: 167px; }
.c-l { width: 98px; }
.c-m { width: 49px; }

.grid td, .grid th {
    padding: 0;
    height: 16px;
    line-height: 15px;
    border-right: 1px solid #000;
    border-bottom: 1px solid #000;
    text-align: center;
    vertical-align: middle;
    overflow: hidden;
    white-space: nowrap;
    font-weight: 400;
}

.grid .letters th {
    height: 15px;
    border-bottom: 1px solid #9c9c9c;
    border-right: 1px solid #e2e2e2;
    color: #444;
    font-size: 11px;
    line-height: 14px;
}

.letters .corner {
    padding: 1px 0 0 8px;
}

.grid .letters .cur {
    background-color: #e1e1e1;
    color: #217346;
    border-bottom: 2px solid #217346;
}

.grid .rh {
    border-right: 1px solid #9c9c9c;
    border-bottom: 1px solid #e2e2e2;
    color: #444;
    vertical-align: bottom;
    letter-spacing: 0;
    font-size: 11.500px;
}

.grid .rh.cur-row {
    background-color: #e1e1e1;
    color: #217346;
    font-weight: 700;
}

/* Row 1 */
.grid .head td {
    height: 112px;
    background-color: #44546a;
    color: #fff;
    font-weight: 700;
    font-size: 11px;
    letter-spacing: 0;
    border-right: none;
    border-bottom: 1px solid #9c9c9c;
}

.grid .head .rh {
    height: 112px;
    border-bottom: 1px solid #9c9c9c;
}

.grid .head .edge {
    border-right: 1px solid #000;
    line-height: 16px;
}

.grid .head .amounts {
    border-right: none;
    padding-bottom: 3px;
}

.grid .head .blank {
    background-color: #fff;
    border-right: 1px solid #d4d4d4;
}

.h-big {
    line-height: 16px;
    letter-spacing: .3px;
}

.h-small {
    font-size: 10px;
    line-height: 14px;
}

/* Columns */
.grid .suite {
    background-color: #c6e0b4;
    font-size: 11.500px;
    line-height: 16px;
}

.suite-shift {
    padding-top: 31px;
}

.grid .id {
    background-color: #c6e0b4;
    font-size: 10.500px;
    letter-spacing: 0;
}

.grid .name {
    background-color: #fff;
    text-align: left;
    padding: 0 0 0 2px;
    white-space: normal;
    font-family: "Liberation Sans", sans-serif;
    letter-spacing: .08px;
    font-size: 12px;
    line-height: 14.5px;
}

.grid .name.cal {
    font-family: Lato, "Liberation Sans", sans-serif;
    font-size: 11.5px;
    letter-spacing: .5px;
    white-space: nowrap;
}

.grid .tall td, .grid .tall th {
    height: 30px;
}

.y {
    background-color: #ffe699;
}

.red {
    color: #ff0000;
}

.gold {
    color: #a67c00;
}

.st.testing {
    color: #c05010;
}

.st.wip {
    background-color: #ffc000;
}

.grid .note-c {
    text-align: left;
    padding-left: 2px;
}

.grid .kl {
    text-align: left;
    padding-left: 2px;
}

.grid .kl.dark {
    background-color: #44546a;
}

.grid .kl.done {
    background-color: #548235;
}

.grid .bold-w {
    color: #fff;
    font-weight: 700;
}

.grid .strong {
    font-weight: 700;
}

.grid .kl.reject {
    background-color: #ffc7ce;
    color: #9c0006;
}

.rust {
    color: #c65911;
}

.orange {
    color: #ed7d31;
}

.grid .blank {
    background-color: #fff;
    border-right: 1px solid #d4d4d4;
    border-bottom: 1px solid #d4d4d4;
}

.grid .selected {
    position: relative;
    overflow: visible;
    outline: 2px solid #217346;
    outline-offset: -2px;
}

.handle {
    position: absolute;
    right: -3px;
    bottom: -3px;
    width: 6px;
    height: 6px;
    background-color: #217346;
    border: 1px solid #fff;
}

/* Scrollbars */
.vscroll {
    width: 15px;
    margin-left: 1px;
    padding-top: 2px;
    display: flex;
    flex-direction: column;
}

.sb-btn {
    height: 13px;
    flex: none;
    border: 1px solid #ababab;
    background-color: #fff;
    display: flex;
    align-items: center;
    justify-content: center;
}

.vtrack {
    flex: 1;
    background-color: #e9e9e9;
}

.vthumb {
    height: 676px;
    background-color: #fff;
    border: 1px solid #ababab;
    border-top: none;
}

/* Sheet tabs */
.sheetbar {
    height: 28px;
    flex: none;
    display: flex;
    align-items: flex-start;
    background-color: #f5f5f5;
    border-top: 1px solid #ababab;
}

.sheet-nav {
    width: 100px;
    padding: 9px 0 0 27px;
    display: flex;
    gap: 24px;
}

.sheet-tab {
    width: 54px;
    height: 24px;
    margin-top: -1px;
    background-color: #fff;
    border-bottom: 2px solid #217346;
    color: #217346;
    font-weight: 700;
    font-size: 12.500px;
    line-height: 24px;
    text-align: center;
}

.add-sheet {
    margin: 4px 0 0 33px;
}

.sheet-dots {
    width: 2px;
    height: 11px;
    margin: 7px 0 0 979px;
    background: repeating-linear-gradient(#aaa 0 2px, transparent 2px 4px);
}

.hscroll {
    margin: 6px 0 0 17px;
    width: 697px;
    height: 15px;
    display: flex;
}

.sb-btn.wide {
    width: 15px;
    height: 15px;
}

.hthumb {
    width: 528px;
    background-color: #fff;
    border: 1px solid #ababab;
    border-left: none;
}

.htrack {
    flex: 1;
    background-color: #e9e9e9;
}

/* Status bar */
.statusbar {
    height: 22px;
    flex: none;
    display: flex;
    align-items: center;
    background-color: #217346;
    color: #fff;
    padding-left: 7px;
    font-size: 10.500px;
}

.status-right {
    margin-left: auto;
    display: flex;
    align-items: center;
    height: 22px;
}

.view {
    width: 38px;
    height: 22px;
    display: flex;
    align-items: center;
    justify-content: center;
    margin-right: .5px;
}

.view.on {
    background-color: #0b6535;
}

.zoom-minus {
    width: 6px;
    height: 2px;
    background-color: #fff;
    margin-left: 5px;
}

.slider {
    position: relative;
    width: 100px;
    height: 1px;
    background-color: #fff;
    margin: 0 4px 0 4px;
}

.slider-knob {
    position: absolute;
    left: 38px;
    top: -6px;
    width: 4px;
    height: 13px;
    background-color: #fff;
}

.slider-tick {
    position: absolute;
    left: 50px;
    top: -3px;
    width: 1px;
    height: 7px;
    background-color: #fff;
}

.zoom-val {
    width: 44px;
    padding-right: 9px;
    text-align: right;
    font-size: 11px;
}

/* Taskbar */
.taskbar {
    height: 40px;
    flex: none;
    display: flex;
    align-items: center;
    gap: 3px;
    padding-left: 53px;
    position: relative;
    background:
        linear-gradient(22deg, transparent 670px, #c6942f 672px),
        linear-gradient(to right, #b27f2c 0, #b5822f 1045px, #bda57a 1110px, #bda57a 1920px);
    color: #fff;
}

.start {
    position: absolute;
    left: 10px;
    top: 7px;
}

.task {
    width: 59px;
    height: 40px;
    display: flex;
    align-items: center;
    justify-content: center;
    border: 1px solid transparent;
    flex: none;
    overflow: hidden;
}

.task.running {
    border-color: rgba(255, 255, 255, .3);
    background-color: rgba(255, 255, 255, .18);
}

.task.active {
    border-color: rgba(255, 255, 255, .85);
    background-color: rgba(255, 255, 255, .32);
}

.skype-s {
    font-family: "Liberation Sans", sans-serif;
    font-size: 22px;
    font-weight: 700;
    fill: #fff;
    text-anchor: middle;
}

.logo-letter {
    font-family: "Liberation Sans", sans-serif;
    font-size: 15px;
    font-weight: 700;
    fill: #fff;
}

.tray {
    position: absolute;
    right: 0;
    top: 0;
    height: 40px;
    display: flex;
    align-items: center;
    padding-right: 10px;
}

.tray-net {
    margin-left: 11px;
}

.tray-vol {
    margin-left: 12.5px;
}

.lang {
    margin-left: 15px;
    width: 25.5px;
    font-size: 12px;
}

.clock {
    text-align: center;
    font-size: 12px;
    line-height: 17px;
    width: 73px;
}
```
